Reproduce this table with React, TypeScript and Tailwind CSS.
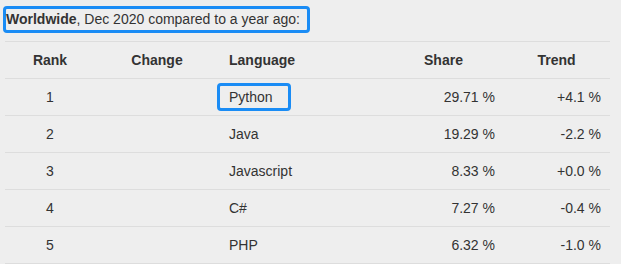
import React from "react";

const rows = [
  { rank: "1", lang: "Python", share: "29.71 %", trend: "+4.1 %", hl: true },
  { rank: "2", lang: "Java", share: "19.29 %", trend: "-2.2 %" },
  { rank: "3", lang: "Javascript", share: "8.33 %", trend: "+0.0 %" },
  { rank: "4", lang: "C#", share: "7.27 %", trend: "-0.4 %" },
  { rank: "5", lang: "PHP", share: "6.32 %", trend: "-1.0 %" },
];

export default function App() {
  return (
    <div
      className="w-[621px] h-[264px] bg-[#eeeeee] text-[#333333] text-[14px] overflow-hidden"
      style={{ fontFamily: '"Liberation Sans", Arial, sans-serif' }}
    >
      <div className="pt-[6px] pl-[3px]">
        <div className="w-[307px] h-[27px] border-[3px] border-[#1a8cf5] rounded-[4px] leading-[21px] whitespace-nowrap">
          <b>Worldwide</b>, Dec 2020 compared to a year ago:
        </div>
      </div>
      <div className="ml-[5px] mt-[8px] w-[605px] border-t border-[#dddddd]">
        <div className="grid grid-cols-[90px_124px_165px_119px_107px] h-[37px] border-b border-[#dddddd] items-center font-bold">
          <div className="text-center">Rank</div>
          <div className="text-center">Change</div>
          <div className="pl-[10px]">Language</div>
          <div className="text-center">Share</div>
          <div className="text-center">Trend</div>
        </div>
        {rows.map((r) => (
          <div
            key={r.rank}
            className="grid grid-cols-[90px_124px_165px_119px_107px] h-[37px] border-b border-[#dddddd] items-center"
          >
            <div className="text-center">{r.rank}</div>
            <div></div>
            {r.hl ? (
              <div className="flex">
                <div className="-ml-[2px] w-[74px] h-[28px] border-[3px] border-[#1a8cf5] rounded-[4px] pl-[9px] leading-[22px]">
                  {r.lang}
                </div>
              </div>
            ) : (
              <div className="pl-[10px]">{r.lang}</div>
            )}
            <div className="text-right pr-[8px]">{r.share}</div>
            <div className="text-right pr-[9px]">{r.trend}</div>
          </div>
        ))}
      </div>
    </div>
  );
}
